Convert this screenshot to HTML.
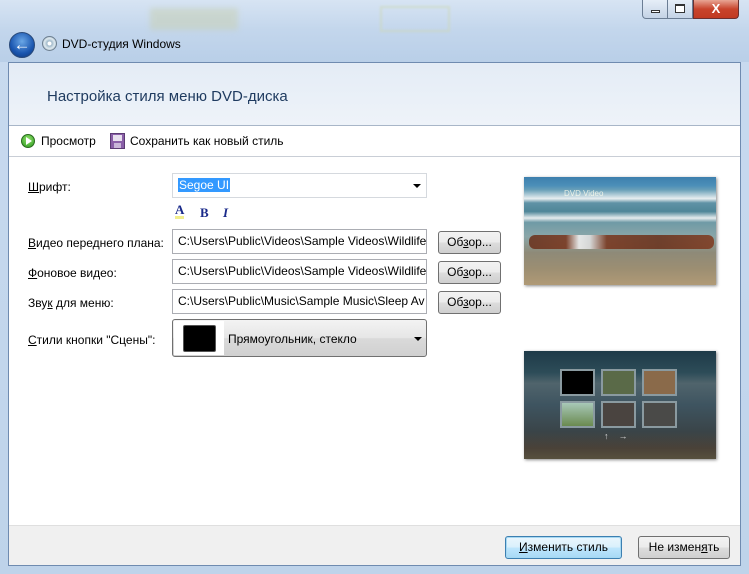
<!DOCTYPE html>
<html><head><meta charset="utf-8"><style>
*{margin:0;padding:0;box-sizing:border-box}
body{width:749px;height:574px;overflow:hidden;font-family:"Liberation Sans","DejaVu Sans",sans-serif;font-size:12px;color:#000;background:linear-gradient(#bcd0e8,#c8daef 40px,#bed3ea);position:relative}
.abs{position:absolute}
.glass{left:0;top:0;width:749px;height:62px;background:linear-gradient(180deg,#d7e4f3 0,#c3d6ec 30px,#b9cfe8 62px)}
.client{left:8px;top:62px;width:733px;height:504px;background:#fff;border:1px solid #6f8bb0}
.head{left:0;top:0;width:731px;height:63px;background:linear-gradient(#e4ecf6,#eef3f9);border-bottom:1px solid #a8b6c8}
.tb{left:0;top:63px;width:731px;height:31px;border-bottom:1px solid #c9ced6}
.foot{left:0;top:462px;width:731px;height:40px;background:#f0f0f0;border-top:1px solid #dfdfdf}
.inp{height:23px;border:1px solid #abadb3;border-top-color:#abadb3;background:#fff;padding:4px 5px;white-space:nowrap;overflow:hidden;font-size:12px}
.btn{height:23px;border:1px solid #707070;border-radius:3px;background:linear-gradient(#f2f2f2 0,#ebebeb 50%,#dddddd 51%,#cfcfcf);text-align:center;font-size:12px;line-height:21px}
u{text-decoration:underline}
</style></head><body>
<div class="abs glass"></div>
<div class="abs" style="left:150px;top:8px;width:88px;height:22px;background:#c7cfb0;opacity:.5;filter:blur(3px)"></div>
<div class="abs" style="left:380px;top:6px;width:70px;height:26px;border:2px solid #cdd8b8;opacity:.6;filter:blur(1px)"></div>
<div class="abs" style="left:446px;top:0;width:300px;height:22px;"></div>
<!-- caption buttons -->
<div class="abs" style="left:642px;top:0;width:26px;height:19px;border:1px solid #6b7d94;border-top:none;border-radius:0 0 0 4px;background:linear-gradient(#e6eef8,#c4d3e6)"><div class="abs" style="left:8px;top:10px;width:9px;height:3px;border:1px solid #333;background:#fff"></div></div>
<div class="abs" style="left:668px;top:0;width:25px;height:19px;border:1px solid #6b7d94;border-top:none;border-left:none;background:linear-gradient(#e6eef8,#c4d3e6)"><div class="abs" style="left:7px;top:4px;width:10px;height:9px;border:1px solid #333;border-top-width:2px;background:#fff"></div></div>
<div class="abs" style="left:693px;top:0;width:46px;height:19px;border:1px solid #6b3030;border-top:none;border-radius:0 0 4px 0;background:linear-gradient(#e8a594,#c8442c 50%,#c13a22);color:#fff;font-weight:bold;text-align:center;font-size:13px;line-height:17px">X</div>
<!-- back + title -->
<div class="abs" style="left:9px;top:32px;width:26px;height:26px;border-radius:50%;background:radial-gradient(circle at 50% 35%,#6aa7e6,#1a56b0 60%,#0c3578);border:1px solid #2a4a7a;color:#fff;font-weight:bold;font-size:17px;text-align:center;line-height:23px">&#8592;</div>
<div class="abs" style="left:42px;top:36px;width:15px;height:15px;border-radius:50%;background:radial-gradient(circle,#fff 20%,#9cb6c8 25%,#dde8ee 55%,#8ca4b6);border:1px solid #6d7f90"></div>
<div class="abs" style="left:62px;top:37px;font-size:12px">DVD-студия Windows</div>
<div class="abs client">
 <div class="abs head"><div class="abs" style="left:38px;top:25px;font-size:15px;color:#1e3a5f">Настройка стиля меню DVD-диска</div></div>
 <div class="abs tb">
  <div class="abs" style="left:12px;top:8px;width:14px;height:14px;border-radius:50%;background:radial-gradient(circle at 50% 35%,#8fe06a,#2c9a1f);border:1px solid #2a6b1e"></div>
  <div class="abs" style="left:17px;top:11px;width:0;height:0;border-left:6px solid #fff;border-top:4px solid transparent;border-bottom:4px solid transparent"></div>
  <div class="abs" style="left:32px;top:8px">Просмотр</div>
  <div class="abs" style="left:101px;top:7px;width:15px;height:16px;background:#8a5fa8;border:1px solid #5b3b73"><div class="abs" style="left:2px;top:1px;width:9px;height:6px;background:#e8e0ee"></div><div class="abs" style="left:3px;top:9px;width:7px;height:5px;background:#c9b6d8"></div></div>
  <div class="abs" style="left:121px;top:8px">Сохранить как новый стиль</div>
 </div>
 <div class="abs" style="left:19px;top:117px"><u>Ш</u>рифт:</div>
 <div class="abs inp" style="left:163px;top:110px;width:255px;height:25px;border-color:#d5d9de"><span style="background:#3399ff;color:#fff;padding:0 1px">Segoe UI</span></div>
 <div class="abs" style="left:404px;top:121px;width:0;height:0;border-left:4px solid transparent;border-right:4px solid transparent;border-top:4px solid #000"></div>
 <div class="abs" style="left:166px;top:140px;font-family:'Liberation Serif',serif;font-weight:bold;color:#1a2a8a;font-size:13px;border-bottom:3px solid #f2ee8c;line-height:13px">A</div>
 <div class="abs" style="left:191px;top:142px;font-family:'Liberation Serif',serif;font-weight:bold;color:#1a2a8a;font-size:13px">B</div>
 <div class="abs" style="left:214px;top:142px;font-family:'Liberation Serif',serif;font-weight:bold;font-style:italic;color:#1a2a8a;font-size:13px">I</div>
 <div class="abs" style="left:19px;top:173px"><u>В</u>идео переднего плана:</div>
 <div class="abs inp" style="left:163px;top:166px;width:255px;height:25px">C:\Users\Public\Videos\Sample Videos\Wildlife</div>
 <div class="abs btn" style="left:429px;top:168px;width:63px">Об<u>з</u>ор...</div>
 <div class="abs" style="left:19px;top:203px"><u>Ф</u>оновое видео:</div>
 <div class="abs inp" style="left:163px;top:196px;width:255px;height:25px">C:\Users\Public\Videos\Sample Videos\Wildlife</div>
 <div class="abs btn" style="left:429px;top:198px;width:63px">Об<u>з</u>ор...</div>
 <div class="abs" style="left:19px;top:233px">Зву<u>к</u> для меню:</div>
 <div class="abs inp" style="left:163px;top:226px;width:255px;height:25px">C:\Users\Public\Music\Sample Music\Sleep Av</div>
 <div class="abs btn" style="left:429px;top:228px;width:63px">Об<u>з</u>ор...</div>
 <div class="abs" style="left:19px;top:270px"><u>С</u>тили кнопки "Сцены":</div>
 <div class="abs" style="left:163px;top:256px;width:255px;height:38px;border:1px solid #707070;border-radius:3px;background:linear-gradient(#f3f3f3,#e6e6e6 50%,#dadada 51%,#d0d0d0)">
  <div class="abs" style="left:1px;top:1px;width:50px;height:34px;background:#fff"></div>
  <div class="abs" style="left:10px;top:5px;width:33px;height:27px;background:#000;border:1px solid #555;border-radius:2px"></div>
  <div class="abs" style="left:55px;top:12px">Прямоугольник, стекло</div>
  <div class="abs" style="left:241px;top:17px;width:0;height:0;border-left:4px solid transparent;border-right:4px solid transparent;border-top:4px solid #000"></div>
 </div>
 <!-- preview 1 -->
 <div class="abs" style="left:515px;top:114px;width:192px;height:108px;box-shadow:1px 1px 3px #888;background:linear-gradient(#3d7fad 0,#4c8fb8 8%,#6aa0b8 12%,#e8eef0 20%,#5f92a6 24%,#4f8698 32%,#e6ecee 38%,#6f9aa6 42%,#8aa6a8 55%,#8e8a78 70%,#9c8e72 85%,#b09a76 100%)">
  <div class="abs" style="left:40px;top:12px;font-size:8px;color:#ffe;opacity:.8">DVD Video</div>
  <div class="abs" style="left:5px;top:58px;width:185px;height:14px;background:linear-gradient(90deg,#6b3520 0,#7a3a22 20%,#eee 27%,#ddd 33%,#7a3a22 42%,#6b3520 70%,#803e24 100%);border-radius:6px;opacity:.9"></div>
 </div>
 <!-- preview 2 -->
 <div class="abs" style="left:515px;top:288px;width:192px;height:108px;box-shadow:1px 1px 3px #888;background:linear-gradient(#1e3a48 0,#2d4c58 20%,#50646c 30%,#3e5460 50%,#3a4448 75%,#4a4238 90%,#57503e 100%)">
  <div class="abs" style="left:36px;top:18px;width:35px;height:27px;background:#000;border:2px solid #8a9aa0"></div>
  <div class="abs" style="left:77px;top:18px;width:35px;height:27px;background:#5a6a48;border:2px solid #8a9aa0"></div>
  <div class="abs" style="left:118px;top:18px;width:35px;height:27px;background:#8a6a4a;border:2px solid #8a9aa0"></div>
  <div class="abs" style="left:36px;top:50px;width:35px;height:27px;background:linear-gradient(#a8c8b8,#6a8a50);border:2px solid #8a9aa0"></div>
  <div class="abs" style="left:77px;top:50px;width:35px;height:27px;background:#4a4440;border:2px solid #8a9aa0"></div>
  <div class="abs" style="left:118px;top:50px;width:35px;height:27px;background:#4a4a48;border:2px solid #8a9aa0"></div>
  <div class="abs" style="left:80px;top:80px;color:#ddd;font-size:9px">&#8593;&nbsp;&nbsp;&nbsp;&nbsp;&#8594;</div>
 </div>
 <div class="abs foot">
  <div class="abs btn" style="left:496px;top:10px;width:117px;border-color:#3c7fb1;background:linear-gradient(#eaf6fd,#d9f0fc 50%,#bee6fd 51%,#a7d9f5);box-shadow:0 0 0 1px #a6d8f2 inset"><u>И</u>зменить стиль</div>
  <div class="abs btn" style="left:629px;top:10px;width:92px">Не измен<u>я</u>ть</div>
 </div>
</div>
</body></html>
